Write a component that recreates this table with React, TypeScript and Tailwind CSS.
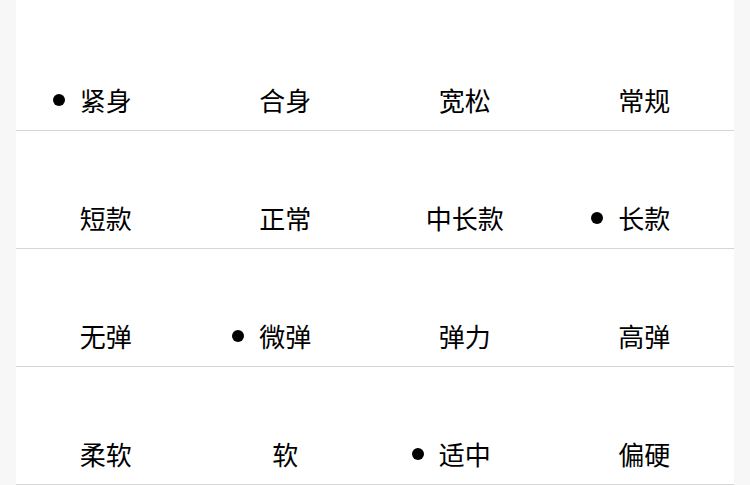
type Option = { label: string; picked?: boolean };

const rows: Option[][] = [
  [{ label: "紧身", picked: true }, { label: "合身" }, { label: "宽松" }, { label: "常规" }],
  [{ label: "短款" }, { label: "正常" }, { label: "中长款" }, { label: "长款", picked: true }],
  [{ label: "无弹" }, { label: "微弹", picked: true }, { label: "弹力" }, { label: "高弹" }],
  [{ label: "柔软" }, { label: "软" }, { label: "适中", picked: true }, { label: "偏硬" }],
];

const Cell = ({ option }: { option: Option }) => (
  <div className="flex items-end justify-center pb-[12px]">
    <span className="relative text-[26px] leading-[36px] text-black">
      {option.picked ? (
        <span className="absolute -left-[27px] top-[12px] h-3 w-3 rounded-full bg-black" />
      ) : null}
      {option.label}
    </span>
  </div>
);

export default function App() {
  return (
    <div
      className="min-h-[485px] bg-[#f7f7f7] px-4"
      style={{ fontFamily: '"Noto Sans CJK SC", "Noto Sans", sans-serif' }}
    >
      <div className="bg-white">
        {rows.map((row, rowIdx) => (
          <div
            key={rowIdx}
            className={
              rowIdx === 0
                ? "grid h-[131px] grid-cols-4 border-b border-[#d6d6d6]"
                : "grid h-[118px] grid-cols-4 border-b border-[#d6d6d6]"
            }
          >
            {row.map((option) => (
              <Cell key={option.label} option={option} />
            ))}
          </div>
        ))}
      </div>
    </div>
  );
}
